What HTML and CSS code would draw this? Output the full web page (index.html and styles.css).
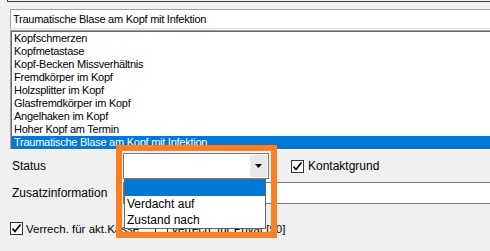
FILE: index.html
```html
<!DOCTYPE html>
<html lang="de">
<head>
    <meta charset="UTF-8">
    <title>Diagnose</title>
    <link rel="stylesheet" href="styles.css">
</head>
<body>
    <!-- bottom edge of the frame above -->
    <div class="frame-edge"></div>

    <div class="field main-field">Traumatische Blase am Kopf mit Infektion</div>

    <ul class="listbox">
        <li>Kopfschmerzen</li>
        <li>Kopfmetastase</li>
        <li>Kopf-Becken Missverhältnis</li>
        <li>Fremdkörper im Kopf</li>
        <li>Holzsplitter im Kopf</li>
        <li>Glasfremdkörper im Kopf</li>
        <li>Angelhaken im Kopf</li>
        <li>Hoher Kopf am Termin</li>
        <li class="selected">Traumatische Blase am Kopf mit Infektion</li>
    </ul>

    <div class="row status-row">
        <span class="label">Status</span>
        <div class="combo">
            <span class="combo-btn">
                <svg width="7" height="4" viewBox="0 0 7 4"><path d="M0 0 H7 L3.5 4 Z" fill="#000"/></svg>
            </span>
        </div>
        <label class="check kontakt">
            <span class="box">
                <svg width="11" height="11" viewBox="0 0 11 11"><path d="M1.5 5.5 L4 8.5 L9.5 1.5" fill="none" stroke="#000" stroke-width="1.7"/></svg>
            </span>
            Kontaktgrund
        </label>
    </div>

    <div class="row zusatz-row">
        <span class="label">Zusatzinformation</span>
        <div class="field zusatz-field"></div>
    </div>

    <div class="row check-row">
        <label class="check first">
            <span class="box">
                <svg width="11" height="11" viewBox="0 0 11 11"><path d="M1.5 5.5 L4 8.5 L9.5 1.5" fill="none" stroke="#000" stroke-width="1.7"/></svg>
            </span>
            Verrech. für akt.Kasse
        </label>
        <label class="check">
            <span class="box"></span>
            Verrech. für Privat [90]
        </label>
    </div>

    <!-- open dropdown of the Status combo -->
    <ul class="dropdown">
        <li class="selected">&nbsp;</li>
        <li>Verdacht auf</li>
        <li>Zustand nach</li>
    </ul>

    <!-- orange marker drawn over the screenshot -->
    <div class="highlight"></div>
</body>
</html>
```

FILE: styles.css
```css
html, body {
    overflow: hidden;
}
body {
    margin: 0;
    background-color: #f0f0f0;
    font-family: "Liberation Sans", Arial, sans-serif;
    font-size: 12px;
    color: #000;
    position: relative;
    height: 251px;
}
.frame-edge {
    margin-left: 7px;
    height: 1px;
    border-left: 1px solid #3c3c3c;
    border-bottom: 1px solid #3c3c3c;
}
.field {
    box-sizing: border-box;
    background-color: #fff;
}
/* fields run on past the right edge, so no right border */
.main-field {
    margin: 7px 0 0 10px;
    height: 20px;
    border: 1px solid;
    border-color: #a0a0a0 #e3e3e3 #e3e3e3 #a0a0a0;
    border-right: 0;
    padding-left: 2px;
    font-size: 11px;
    letter-spacing: -0.25px;
    line-height: 18px;
}
/* sunken list box */
.listbox {
    list-style: none;
    box-sizing: border-box;
    margin: 1px 0 0 10px;
    padding: 1px 0 0 1px;
    height: 120px;
    overflow: hidden;
    background-color: #fff;
    border: 1px solid;
    border-color: #a0a0a0 #fff #fff #a0a0a0;
    border-right: 0;
    box-shadow: inset 1px 1px #696969;
    font-size: 11px;
    letter-spacing: -0.25px;
}
.listbox li {
    height: 13px;
    line-height: 13px;
    padding-left: 2px;
    white-space: nowrap;
}
.listbox li.selected,
.dropdown li.selected {
    background-color: #0078d7;
    color: #fff;
}
.row {
    display: flex;
    align-items: center;
    padding-left: 12px;
}
.label {
    flex: none;
    width: 111px;
}
.status-row {
    margin-top: 3px;
    height: 26px;
}
.combo {
    box-sizing: border-box;
    width: 146px;
    height: 26px;
    border: 1px solid #7a7a7a;
    background-color: #fff;
    display: flex;
    justify-content: flex-end;
    padding: 1px;
}
.combo-btn {
    width: 17px;
    background-color: #e8e8e8;
    display: flex;
    align-items: center;
    justify-content: center;
}
.check {
    display: flex;
    align-items: center;
    gap: 4px;
    white-space: nowrap;
}
.box {
    flex: none;
    box-sizing: border-box;
    width: 13px;
    height: 13px;
    border: 1px solid #333;
    background-color: #fff;
    display: flex;
}
.kontakt {
    margin-left: 22px;
}
.zusatz-row {
    margin-top: 3px;
    height: 22px;
}
.zusatz-field {
    flex: 1;
    height: 22px;
    border: 1px solid #7a7a7a;
    border-right: 0;
}
.check-row {
    margin-top: 18px;
    height: 13px;
    padding-left: 10px;
    font-size: 11.5px;
}
.check-row .first {
    width: 145px;
}
.check-row .check {
    gap: 3px;
}
.dropdown {
    position: absolute;
    left: 124px;
    top: 179px;
    box-sizing: border-box;
    width: 142px;
    margin: 0;
    padding: 0;
    list-style: none;
    background-color: #fff;
    border: 1px solid #646464;
}
.dropdown li {
    height: 16px;
    line-height: 16px;
    padding-left: 2px;
}
.highlight {
    position: absolute;
    left: 116px;
    top: 145px;
    box-sizing: border-box;
    width: 161px;
    height: 93px;
    border: 6px solid #fc7f24;
}
```
